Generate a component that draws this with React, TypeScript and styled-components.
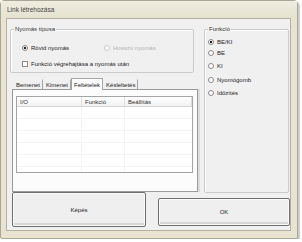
import React from "react";
import styled, { createGlobalStyle } from "styled-components";

const GlobalStyle = createGlobalStyle`
  body {
    margin: 0;
    background: #ffffff;
    font-family: "Liberation Sans", Arial, sans-serif;
  }
  * { box-sizing: border-box; }
`;

const Window = styled.div`
  width: 298px;
  height: 239px;
  background: #e8e4d1;
  border: 1px solid #a9a695;
  border-radius: 4px 4px 2px 2px;
  box-shadow: 2px 2px 1px rgba(0, 0, 0, 0.2);
  display: flex;
  flex-direction: column;
`;

const TitleBar = styled.div`
  height: 17px;
  display: flex;
  align-items: center;
  padding-left: 6px;
  font-size: 6.5px;
  color: #444;
  background: linear-gradient(#efece0, #e6e2cf);
`;

const Client = styled.div`
  flex: 1;
  margin: 0 6px 7px 5px;
  background: #f0f0f0;
  border: 1px solid #b3b0a2;
  display: grid;
  grid-template-columns: 194px 1fr;
  grid-template-rows: 173px 1fr;
`;

const LeftColumn = styled.div`
  display: flex;
  flex-direction: column;
  padding: 7px 0 0 3px;
`;

const GroupBox = styled.fieldset<{ $w: number; $h: number }>`
  margin: 0;
  padding: 0;
  width: ${(p) => p.$w}px;
  height: ${(p) => p.$h}px;
  border: 1px solid #cacaca;
  border-radius: 2px;
  box-shadow: inset 1px 1px 0 #ffffff;
  display: flex;
  flex-direction: column;
  min-width: 0;
`;

const Legend = styled.legend`
  font-size: 6px;
  line-height: 7px;
  color: #333;
  padding: 0 1px;
  margin-left: 3px;
`;

const Row = styled.div<{ $top?: number; $indent?: number }>`
  display: flex;
  align-items: center;
  height: 8px;
  margin-top: ${(p) => p.$top ?? 0}px;
  padding-left: ${(p) => p.$indent ?? 0}px;
`;

const Option = styled.label<{ $w?: number; $disabled?: boolean }>`
  display: flex;
  align-items: center;
  gap: 3px;
  width: ${(p) => (p.$w ? `${p.$w}px` : "auto")};
  font-size: 6px;
  color: ${(p) => (p.$disabled ? "#b4b4b4" : "#222")};
  white-space: nowrap;
`;

const Radio = styled.span<{ $on?: boolean; $disabled?: boolean }>`
  width: 6px;
  height: 6px;
  border-radius: 50%;
  border: 1px solid ${(p) => (p.$disabled ? "#c8c8c8" : "#8a8a8a")};
  background: ${(p) =>
    p.$on ? "radial-gradient(circle, #222 0 1.3px, #fff 1.6px)" : "#fff"};
  flex: none;
`;

const Check = styled.span`
  width: 6px;
  height: 6px;
  border: 1px solid #8a8a8a;
  background: #fff;
  flex: none;
`;

const TabStrip = styled.div`
  display: flex;
  align-items: flex-end;
  height: 12px;
  margin: 4px 0 0 3px;
`;

const Tab = styled.div<{ $active?: boolean }>`
  font-size: 6px;
  color: #222;
  height: ${(p) => (p.$active ? 12 : 10)}px;
  padding: 0 2px;
  display: flex;
  align-items: center;
  background: ${(p) => (p.$active ? "#fcfcfc" : "#f0f0f0")};
  border: 1px solid #a5a5a5;
  border-bottom: none;
  border-top-color: ${(p) => (p.$active ? "#a5a5a5" : "transparent")};
  border-left-color: ${(p) => (p.$active ? "#a5a5a5" : "transparent")};
  margin-bottom: ${(p) => (p.$active ? -1 : 0)}px;
  position: relative;
  z-index: ${(p) => (p.$active ? 1 : 0)};
`;

const TabPanel = styled.div`
  margin-left: 2px;
  width: 186px;
  flex: 1;
  background: #fcfcfc;
  border: 1px solid #9a9a9a;
  box-shadow: 2px 0 0 #dcdcdc;
  padding: 6px 0 0 3px;
`;

const ListView = styled.div`
  width: 177px;
  height: 77px;
  background: #fff;
  border: 1px solid #a4a4a4;
  display: flex;
  flex-direction: column;
`;

const ListHeader = styled.div`
  display: grid;
  grid-template-columns: 65px 43px 1fr;
  height: 10px;
  background: linear-gradient(#ffffff, #f1f1f1);
  border-bottom: 1px solid #d5d5d5;
`;

const HeaderCell = styled.div`
  font-size: 6px;
  color: #333;
  padding-left: 3px;
  display: flex;
  align-items: center;
  border-right: 1px solid #dcdcdc;
`;

const ListBody = styled.div`
  flex: 1;
  background-image: linear-gradient(#f3f3f3 1px, transparent 1px),
    linear-gradient(90deg, transparent 64px, #f3f3f3 64px, #f3f3f3 65px, transparent 65px,
      transparent 107px, #f3f3f3 107px, #f3f3f3 108px, transparent 108px);
  background-size: 100% 12px, 100% 100%;
  background-position: 0 11px, 0 0;
`;

const RightColumn = styled.div`
  padding: 7px 0 0 3px;
  display: flex;
`;

const ButtonRow = styled.div`
  grid-column: 1 / -1;
  display: flex;
  align-items: flex-start;
  gap: 12px;
  padding-left: 5px;
`;

const Button = styled.button<{ $w: number; $h: number; $top?: number }>`
  width: ${(p) => p.$w}px;
  height: ${(p) => p.$h}px;
  margin-top: ${(p) => p.$top ?? 0}px;
  background: #efefef;
  border: 1px solid #707070;
  border-radius: 2px;
  box-shadow: inset 0 0 0 1px #fafafa, inset 0 -2px 0 1px #d6d6d6;
  font-family: inherit;
  font-size: 6px;
  color: #222;
  padding: 0;
`;

const functions = ["BE/KI", "BE", "KI", "Nyomógomb", "Időzítés"];
const functionGaps = [5, 3, 5, 6, 5];

const App = () => {
  return (
    <>
      <GlobalStyle />
      <Window>
        <TitleBar>Link létrehozása</TitleBar>
        <Client>
          <LeftColumn>
            <GroupBox $w={184} $h={47}>
              <Legend>Nyomás típusa</Legend>
              <Row $top={11} $indent={11}>
                <Option $w={82}>
                  <Radio $on />
                  Rövid nyomás
                </Option>
                <Option $disabled>
                  <Radio $disabled />
                  Hosszú nyomás
                </Option>
              </Row>
              <Row $top={8} $indent={11}>
                <Option>
                  <Check />
                  Funkció végrehajtása a nyomás után
                </Option>
              </Row>
            </GroupBox>
            <TabStrip>
              <Tab>Bemenet</Tab>
              <Tab>Kimenet</Tab>
              <Tab $active>Feltételek</Tab>
              <Tab>Késleltetés</Tab>
            </TabStrip>
            <TabPanel>
              <ListView>
                <ListHeader>
                  <HeaderCell>I/O</HeaderCell>
                  <HeaderCell>Funkció</HeaderCell>
                  <HeaderCell>Beállítás</HeaderCell>
                </ListHeader>
                <ListBody />
              </ListView>
            </TabPanel>
          </LeftColumn>
          <RightColumn>
            <GroupBox $w={85} $h={167}>
              <Legend>Funkció</Legend>
              {functions.map((t, i) => (
                <Row key={t} $top={functionGaps[i]} $indent={3}>
                  <Option>
                    <Radio $on={i === 0} />
                    {t}
                  </Option>
                </Row>
              ))}
            </GroupBox>
          </RightColumn>
          <ButtonRow>
            <Button $w={134} $h={35}>Képés</Button>
            <Button $w={132} $h={28} $top={6}>OK</Button>
          </ButtonRow>
        </Client>
      </Window>
    </>
  );
};

export default App;
